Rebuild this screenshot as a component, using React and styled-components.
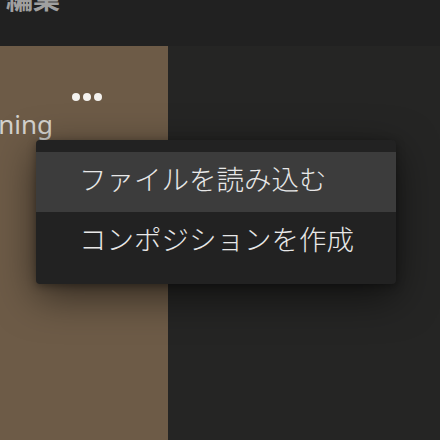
import React from "react";
import styled, { createGlobalStyle } from "styled-components";

const GlobalStyle = createGlobalStyle`
  html, body {
    margin: 0;
    padding: 0;
    background: #252524;
    overflow: hidden;
  }
  body {
    font-family: "Noto Sans", "Noto Sans CJK JP", sans-serif;
  }
`;

const Screen = styled.div`
  position: relative;
  width: 440px;
  height: 440px;
  display: flex;
  flex-direction: column;
  overflow: hidden;
`;

const TopBar = styled.div`
  height: 46px;
  flex: none;
  background: #212121;
  overflow: hidden;
`;

const Title = styled.div`
  margin: -18px 0 0 6px;
  font-family: "Noto Sans CJK JP", sans-serif;
  font-weight: 700;
  font-size: 27px;
  line-height: 32px;
  color: #a0a0a0;
`;

const Main = styled.div`
  flex: 1;
  display: flex;
`;

const Clip = styled.div`
  width: 168px;
  flex: none;
  background: #6d5b47;
  display: flex;
  flex-direction: column;
  overflow: hidden;
`;

const DotsButton = styled.div`
  align-self: center;
  margin: 47px 0 0 6px;
  display: flex;
  gap: 3px;
`;

const Dot = styled.span`
  width: 8px;
  height: 8px;
  border-radius: 50%;
  background: #f4f2ef;
`;

/* label runs off the left edge, so its end is pinned and it spills left */
const ClipName = styled.div`
  width: 53px;
  margin-top: 7px;
  display: flex;
  justify-content: flex-end;
  font-family: "Noto Sans", sans-serif;
  font-size: 26px;
  line-height: 32px;
  color: #d4d2ce;
  white-space: nowrap;
`;

const Stage = styled.div`
  flex: 1;
  background: #252524;
`;

const Menu = styled.ul`
  position: absolute;
  top: 140px;
  left: 36px;
  width: 360px;
  margin: 0;
  padding: 12px 0;
  list-style: none;
  background: #222222;
  border-radius: 4px;
  box-shadow: 0 12px 40px rgba(0, 0, 0, 0.55), 0 2px 8px rgba(0, 0, 0, 0.35);
`;

const MenuItem = styled.li`
  height: 60px;
  display: flex;
  align-items: center;
  padding: 0 0 9px 43px;
  box-sizing: border-box;
  background: ${props => (props.active ? "#3c3c3c" : "transparent")};
  font-family: "Noto Sans CJK JP", sans-serif;
  font-size: 27.5px;
  font-weight: 300;
  color: #e8e8e8;
  white-space: nowrap;
`;

export default function App() {
  return (
    <Screen>
      <GlobalStyle />
      <TopBar>
        <Title>編集</Title>
      </TopBar>
      <Main>
        <Clip>
          <DotsButton>
            <Dot />
            <Dot />
            <Dot />
          </DotsButton>
          <ClipName>
            <span>Opening</span>
          </ClipName>
        </Clip>
        <Stage />
      </Main>
      <Menu>
        <MenuItem active>ファイルを読み込む</MenuItem>
        <MenuItem>コンポジションを作成</MenuItem>
      </Menu>
    </Screen>
  );
}
